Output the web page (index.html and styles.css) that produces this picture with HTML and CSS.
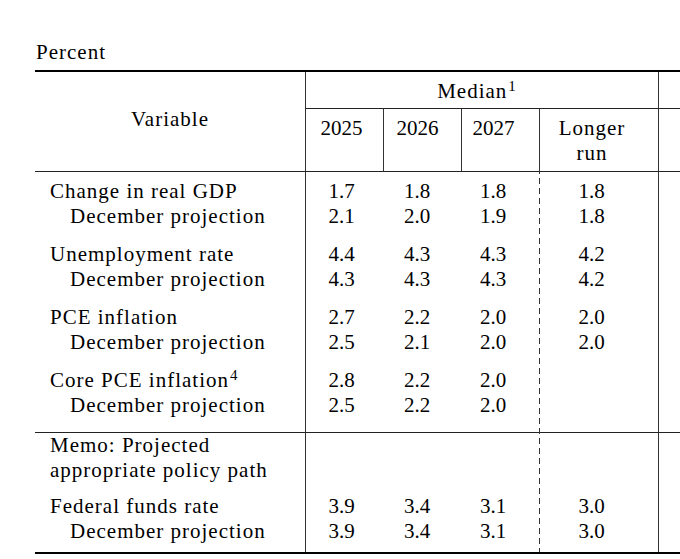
FILE: index.html
```html
<!DOCTYPE html>
<html lang="en">
<head>
<meta charset="utf-8">
<title>Economic projections</title>
<link rel="stylesheet" href="styles.css">
</head>
<body>
<div class="page">
  <div class="unit">Percent</div>
  <div class="proj">
    <div class="h-var">Variable</div>
    <div class="h-median">Median<sup class="fn">1</sup></div>
    <div class="h-extra"></div>
    <div class="h-year c2">2025</div>
    <div class="h-year c3">2026</div>
    <div class="h-year c4">2027</div>
    <div class="h-year c5">Longer<br>run</div>
    <div class="h-year c6"></div>

    <div class="lbl g1 first"><div>Change in real GDP</div><div class="sub">December projection</div></div>
    <div class="val g1 first c2 rule">1.7<br>2.1</div>
    <div class="val g1 first c3">1.8<br>2.0</div>
    <div class="val g1 first c4">1.8<br>1.9</div>
    <div class="val g1 first c5">1.8<br>1.8</div>
    <div class="val g1 first c6 rule"></div>

    <div class="lbl g2"><div>Unemployment rate</div><div class="sub">December projection</div></div>
    <div class="val g2 c2 rule">4.4<br>4.3</div>
    <div class="val g2 c3">4.3<br>4.3</div>
    <div class="val g2 c4">4.3<br>4.3</div>
    <div class="val g2 c5">4.2<br>4.2</div>
    <div class="val g2 c6 rule"></div>

    <div class="lbl g3"><div>PCE inflation</div><div class="sub">December projection</div></div>
    <div class="val g3 c2 rule">2.7<br>2.5</div>
    <div class="val g3 c3">2.2<br>2.1</div>
    <div class="val g3 c4">2.0<br>2.0</div>
    <div class="val g3 c5">2.0<br>2.0</div>
    <div class="val g3 c6 rule"></div>

    <div class="lbl g4"><div>Core PCE inflation<sup class="fn">4</sup></div><div class="sub">December projection</div></div>
    <div class="val g4 c2 rule">2.8<br>2.5</div>
    <div class="val g4 c3">2.2<br>2.2</div>
    <div class="val g4 c4">2.0<br>2.0</div>
    <div class="val g4 c5"></div>
    <div class="val g4 c6 rule"></div>

    <div class="lbl g5 memo"><div>Memo: Projected</div><div>appropriate policy path</div></div>
    <div class="val g5 memo c2 rule"></div>
    <div class="val g5 memo c3"></div>
    <div class="val g5 memo c4"></div>
    <div class="val g5 memo c5"></div>
    <div class="val g5 memo c6 rule"></div>

    <div class="lbl g6"><div>Federal funds rate</div><div class="sub">December projection</div></div>
    <div class="val g6 c2 rule">3.9<br>3.9</div>
    <div class="val g6 c3">3.4<br>3.4</div>
    <div class="val g6 c4">3.1<br>3.1</div>
    <div class="val g6 c5">3.0<br>3.0</div>
    <div class="val g6 c6 rule"></div>

    <div class="dash"></div>
  </div>
</div>
</body>
</html>
```

FILE: styles.css
```css
html, body {
  margin: 0;
  padding: 0;
  overflow: hidden;
  background: #fff;
}

body {
  font-family: "Liberation Serif", "Times New Roman", serif;
  font-size: 21px;
  line-height: 25px;
  color: #000;
}

.page {
  padding: 39.7px 0 0 35px;
  width: 760px;
}

.unit {
  padding-left: 1px;
  letter-spacing: 1px;
  margin-bottom: 5.3px;
}

.proj {
  display: grid;
  grid-template-columns: 270px 78px 78px 78px 119px 100px;
  width: max-content;
  border-top: 2px solid #000;
  border-bottom: 2px solid #000;
}

.fn {
  font-size: 15px;
  line-height: 0;
  vertical-align: 7px;
  letter-spacing: 0;
  margin-left: 1px;
}

/* header */
.h-var {
  grid-column: 1;
  grid-row: 1 / span 2;
  display: flex;
  align-items: center;
  justify-content: center;
  padding-bottom: 4px;
  letter-spacing: 1px;
}

.h-median {
  grid-column: 2 / span 4;
  grid-row: 1;
  text-align: center;
  padding: 6.7px 11px 4.3px 0;
  border-left: 1px solid #333;
  border-bottom: 1px solid #222;
  letter-spacing: 1px;
}

.h-extra {
  grid-column: 6;
  grid-row: 1;
  border-left: 1px solid #333;
  border-bottom: 1px solid #222;
}

.h-year {
  grid-row: 2;
  text-align: center;
  padding-top: 7.4px;
  padding-bottom: 4.6px;
  border-left: 1px solid #333;
}

.h-year.c5 {
  letter-spacing: 1px;
}

/* columns */
.c2 { grid-column: 2; padding-right: 6px; }
.c3 { grid-column: 3; padding-right: 10px; }
.c4 { grid-column: 4; padding-right: 14px; }
.c5 { grid-column: 5; padding-right: 14px; }
.c6 { grid-column: 6; }

/* body rows */
.g1 { grid-row: 3; }
.g2 { grid-row: 4; }
.g3 { grid-row: 5; }
.g4 { grid-row: 6; }
.g5 { grid-row: 7; }
.g6 { grid-row: 8; }

.lbl {
  grid-column: 1;
  padding: 6.65px 0 6.65px 15px;
  letter-spacing: 1px;
}

.sub {
  padding-left: 20px;
}

.val {
  text-align: center;
  padding-top: 6.65px;
  padding-bottom: 6.65px;
}

.rule {
  border-left: 1px solid #333;
}

.first {
  border-top: 1px solid #222;
}

.g4 {
  padding-bottom: 13.5px;
}

.memo {
  border-top: 1px solid #222;
  padding-top: 0;
  padding-bottom: 5.5px;
}

.g6 {
  padding-top: 5.5px;
  padding-bottom: 8px;
}

.dash {
  grid-column: 5;
  grid-row: 3 / 9;
  background-image: linear-gradient(#333 60%, transparent 60%);
  background-size: 1px 10px;
  background-repeat: repeat-y;
  background-position: 0 7px;
}
```
